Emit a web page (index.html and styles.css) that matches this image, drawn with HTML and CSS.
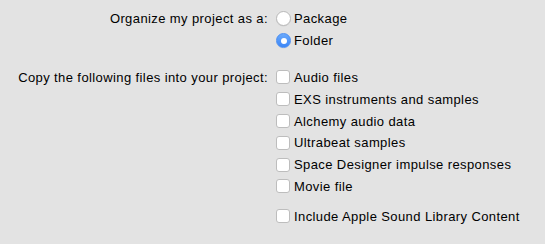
FILE: index.html
```html
<!DOCTYPE html>
<html>
<head>
<meta charset="utf-8">
<link rel="stylesheet" href="styles.css">
</head>
<body>
<div class="form">
  <div class="label">Organize my project as a:</div>
  <div class="group">
    <label class="opt"><span class="radio"></span>Package</label>
    <label class="opt"><span class="radio on"></span>Folder</label>
  </div>

  <div class="label sec">Copy the following files into your project:</div>
  <div class="group sec">
    <label class="opt"><span class="check"></span>Audio files</label>
    <label class="opt"><span class="check"></span>EXS instruments and samples</label>
    <label class="opt"><span class="check"></span>Alchemy audio data</label>
    <label class="opt"><span class="check"></span>Ultrabeat samples</label>
    <label class="opt"><span class="check"></span>Space Designer impulse responses</label>
    <label class="opt"><span class="check"></span>Movie file</label>
    <label class="opt extra"><span class="check"></span>Include Apple Sound Library Content</label>
  </div>
</div>
</body>
</html>
```

FILE: styles.css
```css
html, body {
  margin: 0;
  padding: 0;
  background: #e3e3e3;
}
body {
  width: 545px;
  height: 244px;
  overflow: hidden;
  font-family: "Liberation Sans", Arial, sans-serif;
  font-size: 13px;
  letter-spacing: 0.4px;
  color: #000;
}
.form {
  display: grid;
  grid-template-columns: 268px auto;
  column-gap: 8px;
  padding-top: 8px;
}
.label {
  text-align: right;
  line-height: 21.8px;
  height: 21.8px;
}
.sec {
  margin-top: 15px;
}
.group {
  display: flex;
  flex-direction: column;
}
.opt {
  display: flex;
  align-items: center;
  height: 21.8px;
  gap: 3px;
}
.extra {
  margin-top: 8px;
}
.radio {
  width: 15px;
  height: 15px;
  box-sizing: border-box;
  border-radius: 50%;
  background: #fff;
  border: 1px solid #b9b9b9;
  box-shadow: 0 0.5px 0.5px rgba(0,0,0,0.08);
  display: flex;
  align-items: center;
  justify-content: center;
}
.radio.on {
  background: linear-gradient(#6aa9fb, #3b86f7);
  border-color: #4a8ef3;
}
.radio.on::after {
  content: "";
  width: 6px;
  height: 6px;
  border-radius: 50%;
  background: #fff;
}
.check {
  width: 14px;
  height: 14px;
  box-sizing: border-box;
  border-radius: 3px;
  background: #fff;
  border: 1px solid #bdbdbd;
  margin-right: 1px;
}
```
